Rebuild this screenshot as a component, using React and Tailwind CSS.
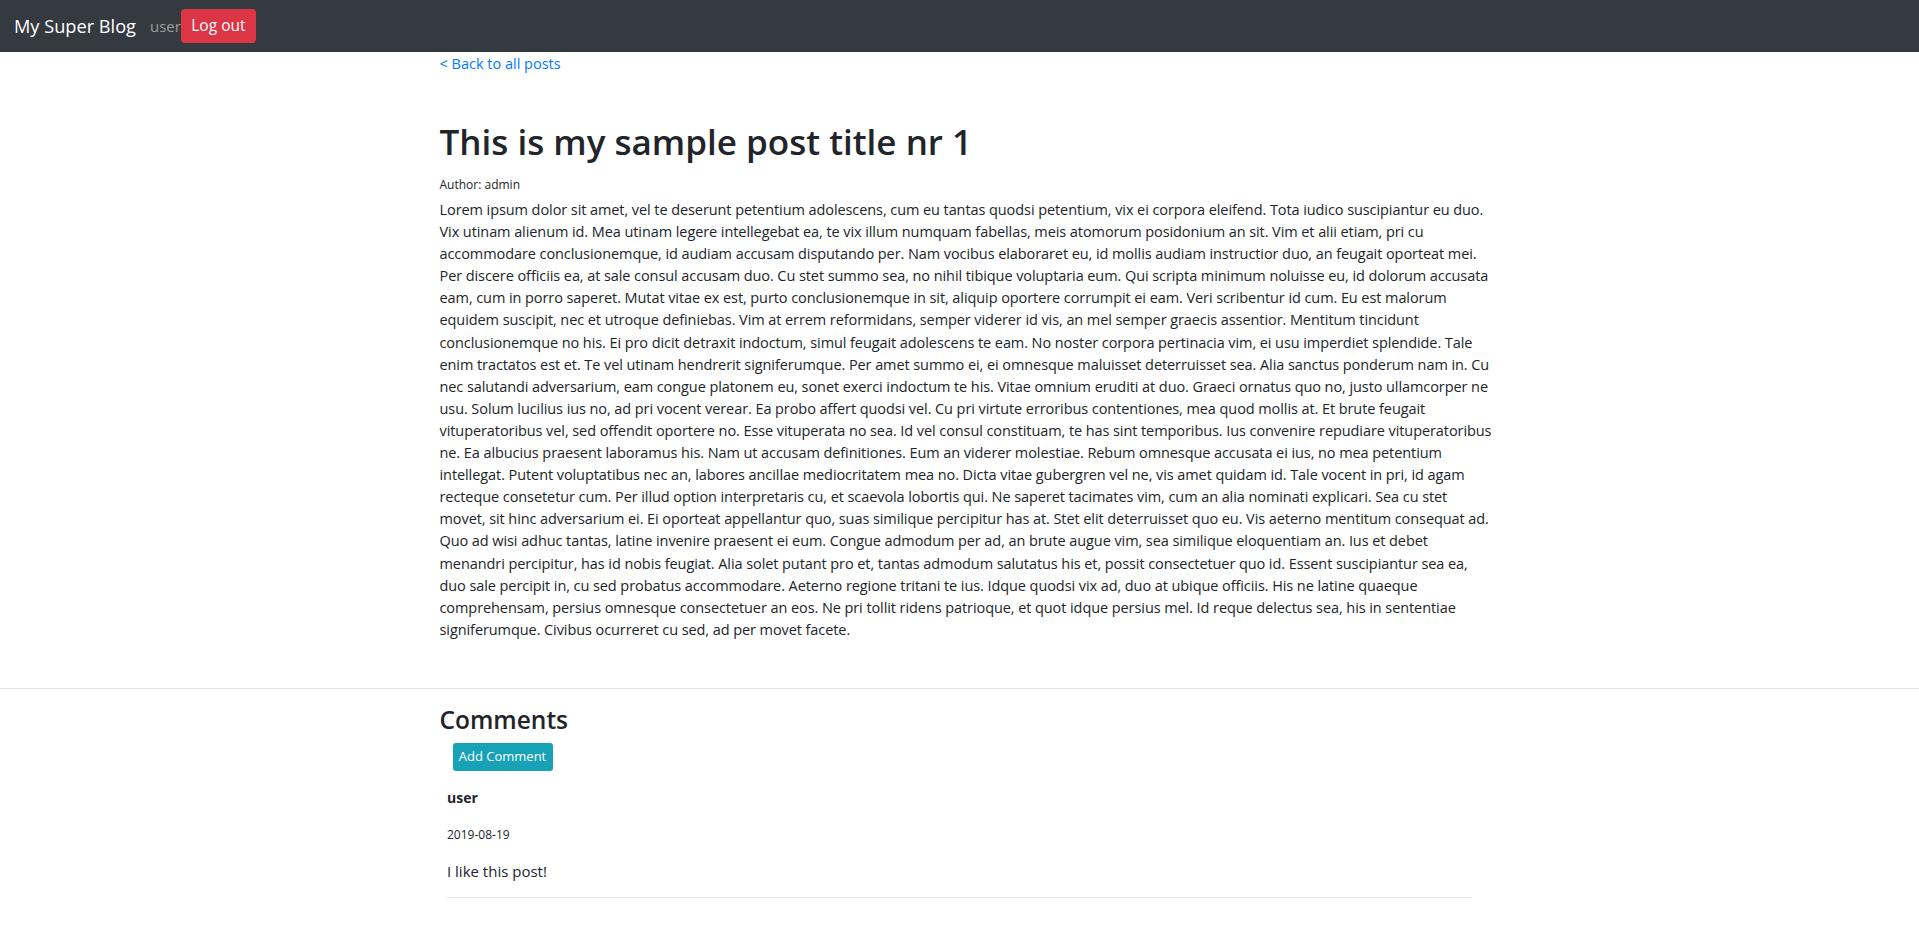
const lines = [
  "Lorem ipsum dolor sit amet, vel te deserunt petentium adolescens, cum eu tantas quodsi petentium, vix ei corpora eleifend. Tota iudico suscipiantur eu duo.",
  "Vix utinam alienum id. Mea utinam legere intellegebat ea, te vix illum numquam fabellas, meis atomorum posidonium an sit. Vim et alii etiam, pri cu",
  "accommodare conclusionemque, id audiam accusam disputando per. Nam vocibus elaboraret eu, id mollis audiam instructior duo, an feugait oporteat mei.",
  "Per discere officiis ea, at sale consul accusam duo. Cu stet summo sea, no nihil tibique voluptaria eum. Qui scripta minimum noluisse eu, id dolorum accusata",
  "eam, cum in porro saperet. Mutat vitae ex est, purto conclusionemque in sit, aliquip oportere corrumpit ei eam. Veri scribentur id cum. Eu est malorum",
  "equidem suscipit, nec et utroque definiebas. Vim at errem reformidans, semper viderer id vis, an mel semper graecis assentior. Mentitum tincidunt",
  "conclusionemque no his. Ei pro dicit detraxit indoctum, simul feugait adolescens te eam. No noster corpora pertinacia vim, ei usu imperdiet splendide. Tale",
  "enim tractatos est et. Te vel utinam hendrerit signiferumque. Per amet summo ei, ei omnesque maluisset deterruisset sea. Alia sanctus ponderum nam in. Cu",
  "nec salutandi adversarium, eam congue platonem eu, sonet exerci indoctum te his. Vitae omnium eruditi at duo. Graeci ornatus quo no, justo ullamcorper ne",
  "usu. Solum lucilius ius no, ad pri vocent verear. Ea probo affert quodsi vel. Cu pri virtute erroribus contentiones, mea quod mollis at. Et brute feugait",
  "vituperatoribus vel, sed offendit oportere no. Esse vituperata no sea. Id vel consul constituam, te has sint temporibus. Ius convenire repudiare vituperatoribus",
  "ne. Ea albucius praesent laboramus his. Nam ut accusam definitiones. Eum an viderer molestiae. Rebum omnesque accusata ei ius, no mea petentium",
  "intellegat. Putent voluptatibus nec an, labores ancillae mediocritatem mea no. Dicta vitae gubergren vel ne, vis amet quidam id. Tale vocent in pri, id agam",
  "recteque consetetur cum. Per illud option interpretaris cu, et scaevola lobortis qui. Ne saperet tacimates vim, cum an alia nominati explicari. Sea cu stet",
  "movet, sit hinc adversarium ei. Ei oporteat appellantur quo, suas similique percipitur has at. Stet elit deterruisset quo eu. Vis aeterno mentitum consequat ad.",
  "Quo ad wisi adhuc tantas, latine invenire praesent ei eum. Congue admodum per ad, an brute augue vim, sea similique eloquentiam an. Ius et debet",
  "menandri percipitur, has id nobis feugiat. Alia solet putant pro et, tantas admodum salutatus his et, possit consectetuer quo id. Essent suscipiantur sea ea,",
  "duo sale percipit in, cu sed probatus accommodare. Aeterno regione tritani te ius. Idque quodsi vix ad, duo at ubique officiis. His ne latine quaeque",
  "comprehensam, persius omnesque consectetuer an eos. Ne pri tollit ridens patrioque, et quot idque persius mel. Id reque delectus sea, his in sententiae",
  "signiferumque. Civibus ocurreret cu sed, ad per movet facete.",
];

export default function App() {
  return (
    <div className="min-h-[937px] bg-white text-[#212529] font-['Open_Sans',sans-serif]">
      <nav className="h-[52px] bg-[#343a40] flex items-center pl-[14px]">
        <span className="text-white text-[18.2px] leading-[30px] mr-[14px]">My Super Blog</span>
        <span className="text-white/50 text-[15px]">user</span>
        <button className="h-[34px] w-[75px] bg-[#dc3545] text-white text-[15.5px] rounded-[4px]">Log out</button>
      </nav>

      <main className="w-[1040px] mx-auto">
        <a href="#" className="block text-[#007bff] text-[14.5px] leading-[24px]">&lt; Back to all posts</a>

        <h1 className="mt-[42px] text-[35px] leading-[48px] font-semibold">This is my sample post title nr 1</h1>
        <div className="mt-[9px] text-[12px] leading-[19px]">Author: admin</div>
        <div className="mt-[5px] text-[14.5px] leading-[22.1px] tracking-[-0.08px]">
          {lines.map((l, i) => (
            <div key={i} className="whitespace-nowrap">{l}</div>
          ))}
        </div>
      </main>

      <hr className="mt-[47px] border-0 border-t border-[#e5e5e5]" />

      <section className="w-[1040px] mx-auto">
        <h3 className="mt-[14px] text-[24.5px] leading-[34px] font-semibold">Comments</h3>
        <button className="mt-[6px] ml-[13px] h-[28px] w-[100px] bg-[#17a2b8] text-white text-[13px] rounded-[3px]">Add Comment</button>
        <div className="mx-[7.5px] mt-[16px] border-b border-[#e5e5e5] pb-[14px]">
          <div className="text-[14px] leading-[22px] font-bold">user</div>
          <div className="mt-[17px] text-[12px] leading-[18px]">2019-08-19</div>
          <div className="mt-[15px] text-[15px] leading-[24px]">I like this post!</div>
        </div>
      </section>
    </div>
  );
}
